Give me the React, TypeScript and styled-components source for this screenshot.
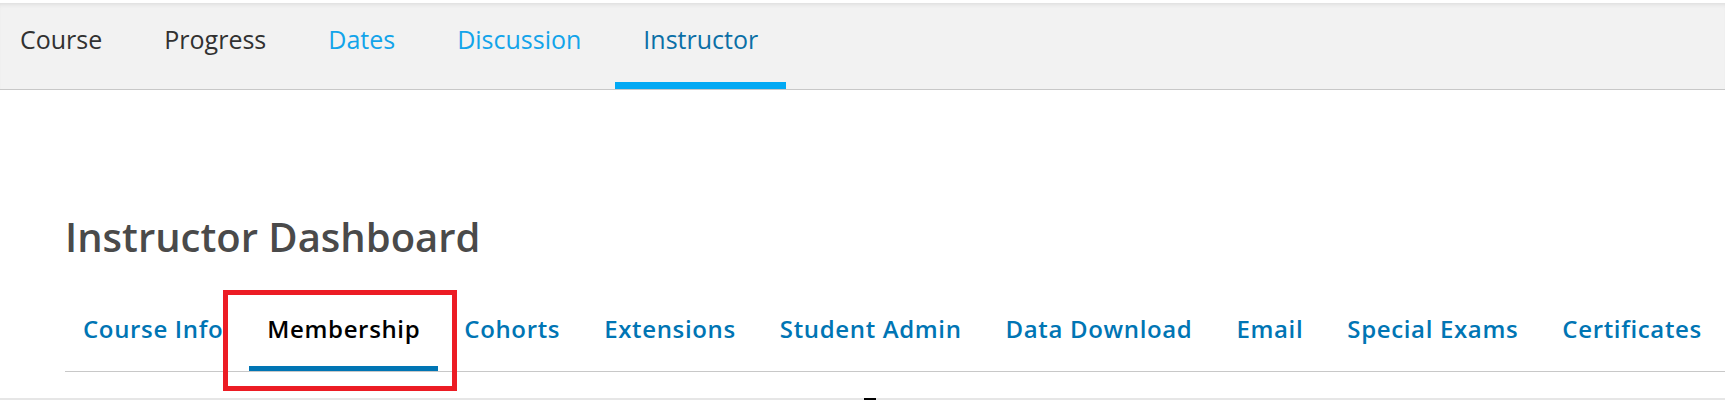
import styled, { createGlobalStyle } from "styled-components";

const GlobalStyle = createGlobalStyle`
  html, body {
    margin: 0;
    padding: 0;
    background: #ffffff;
    font-family: "Open Sans", "Noto Sans", "Liberation Sans", sans-serif;
    overflow: hidden;
  }
`;

const COURSE_TABS = [
  { id: "course", title: "Course", tone: "dark" },
  { id: "progress", title: "Progress", tone: "dark" },
  { id: "dates", title: "Dates", tone: "light" },
  { id: "discussion", title: "Discussion", tone: "light" },
  { id: "instructor", title: "Instructor", tone: "active" },
] as const;

const DASHBOARD_TABS = [
  "Course Info",
  "Membership",
  "Cohorts",
  "Extensions",
  "Student Admin",
  "Data Download",
  "Email",
  "Special Exams",
  "Certificates",
];

type Tone = "dark" | "light" | "active";

const toneColor: Record<Tone, string> = {
  dark: "#313131",
  light: "#12a4ea",
  active: "#0b6fa6",
};

const CourseNav = styled.nav`
  display: flex;
  gap: 62px;
  margin-top: 3px;
  height: 86px;
  padding: 0 0 0 20px;
  background: #f2f2f2;
  box-shadow: inset 0 4px 5px -3px rgba(0, 0, 0, 0.1);
  border-bottom: 1px solid #c8c8c8;
`;

const CourseTab = styled.a<{ $tone: Tone }>`
  position: relative;
  padding-top: 20px;
  font-size: 25px;
  line-height: 33px;
  color: ${({ $tone }) => toneColor[$tone]};
  text-decoration: none;

  ${({ $tone }) =>
    $tone === "active" &&
    `
    &::after {
      content: "";
      position: absolute;
      left: -28px;
      right: -28px;
      bottom: 0;
      height: 7px;
      background: #02a9f4;
    }
  `}
`;

const Main = styled.main`
  padding: 122px 0 25px 65px;
`;

const Heading = styled.h1`
  margin: 0;
  font-size: 40px;
  line-height: 50px;
  font-weight: 600;
  color: #4a4a4a;
`;

const TabList = styled.ul`
  display: flex;
  gap: 8px;
  margin: 30px 0 0;
  padding: 0;
  list-style: none;
  border-bottom: 1px solid #c8c8c8;
`;

const Tab = styled.li<{ $active?: boolean }>`
  position: relative;
  padding: 22px 18px 22px;
  font-size: 24px;
  line-height: 30px;
  letter-spacing: 0.65px;
  font-weight: 600;
  white-space: nowrap;
  color: ${({ $active }) => ($active ? "#000000" : "#0075b4")};
  border-bottom: 5px solid ${({ $active }) => ($active ? "#0075b4" : "transparent")};
`;

const Highlight = styled.span`
  position: absolute;
  left: -26px;
  right: -19px;
  top: -2px;
  bottom: -25px;
  border: 5px solid #ec1c24;
  pointer-events: none;
`;

const Footer = styled.footer`
  height: 3px;
  padding-left: 864px;
  background: #e6e6e6;
`;

const FooterMark = styled.span`
  display: block;
  width: 12px;
  height: 2px;
  margin-top: 1px;
  background: #000000;
`;

export default function App() {
  return (
    <>
      <GlobalStyle />
      <CourseNav>
        {COURSE_TABS.map((tab) => (
          <CourseTab key={tab.id} $tone={tab.tone}>
            {tab.title}
          </CourseTab>
        ))}
      </CourseNav>
      <Main>
        <Heading>Instructor Dashboard</Heading>
        <TabList>
          {DASHBOARD_TABS.map((title) => (
            <Tab key={title} $active={title === "Membership"}>
              {title}
              {title === "Membership" && <Highlight />}
            </Tab>
          ))}
        </TabList>
      </Main>
      <Footer>
        <FooterMark />
      </Footer>
    </>
  );
}
